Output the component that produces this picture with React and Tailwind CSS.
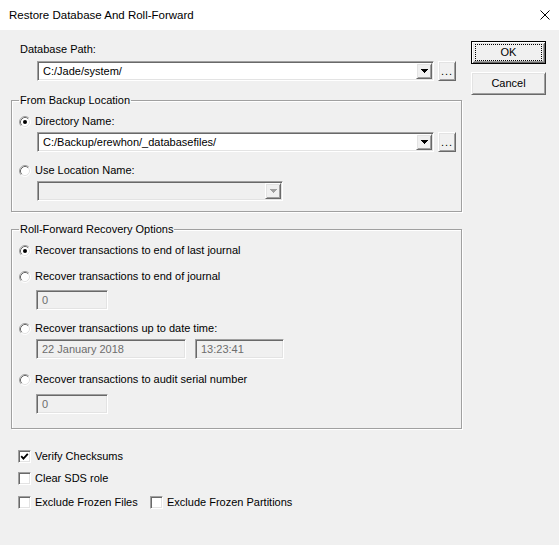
import React from "react";

const sunken =
  "border border-t-[#a0a0a0] border-l-[#a0a0a0] border-r-white border-b-white shadow-[inset_1px_1px_0_#696969,inset_-1px_-1px_0_#e3e3e3]";
const raised =
  "border border-t-white border-l-white border-r-[#696969] border-b-[#696969] shadow-[inset_1px_1px_0_#e3e3e3,inset_-1px_-1px_0_#a0a0a0]";

function Arrow({ color = "#000" }) {
  return (
    <svg width="7" height="4" viewBox="0 0 7 4" shapeRendering="crispEdges">
      <path d="M0 0h7v1h-1v1h-1v1h-1v1h-1v-1h-1v-1h-1v-1h-1z" fill={color} />
    </svg>
  );
}

function Combo({ width, value, disabled }) {
  return (
    <div
      className={`${sunken} h-[20px] p-[1px] flex ${disabled ? "bg-[#f0f0f0]" : "bg-white"}`}
      style={{ width }}
    >
      <div className="flex-1 flex items-center pl-[4px] whitespace-nowrap overflow-hidden">{value}</div>
      <div className={`${raised} w-[16px] h-[16px] bg-[#f0f0f0] flex items-center justify-center`}>
        <Arrow color={disabled ? "#a0a0a0" : "#000"} />
      </div>
    </div>
  );
}

function Ellipsis() {
  return (
    <div className={`${raised} w-[18px] h-[20px] bg-[#f0f0f0] flex items-center justify-center pt-[1px] tracking-[1px]`}>
      ...
    </div>
  );
}

function TextBox({ width, value }) {
  return (
    <div
      className={`${sunken} h-[20px] bg-[#f0f0f0] text-[#6d6d6d] flex items-center pl-[5px]`}
      style={{ width }}
    >
      {value}
    </div>
  );
}

function Radio({ checked }) {
  return (
    <svg width="12" height="12" viewBox="0 0 12 12" className="shrink-0">
      <circle cx="6" cy="6" r="5" fill="#fff" />
      <path d="M2.11 9.89A5.5 5.5 0 0 1 9.89 2.11" stroke="#a0a0a0" fill="none" />
      <path d="M9.89 2.11A5.5 5.5 0 0 1 2.11 9.89" stroke="#ffffff" fill="none" />
      <path d="M2.82 9.18A4.5 4.5 0 0 1 9.18 2.82" stroke="#696969" fill="none" />
      <path d="M9.18 2.82A4.5 4.5 0 0 1 2.82 9.18" stroke="#e3e3e3" fill="none" />
      {checked && <circle cx="6" cy="6" r="2" fill="#000" />}
    </svg>
  );
}

function RadioRow({ checked, label, className = "" }) {
  return (
    <div className={`h-[13px] flex items-center gap-[4px] ml-[7px] ${className}`}>
      <Radio checked={checked} />
      <span className="whitespace-nowrap">{label}</span>
    </div>
  );
}

function Check({ checked }) {
  return (
    <div className={`${sunken} w-[13px] h-[13px] bg-white shrink-0 flex items-center justify-center`}>
      {checked && (
        <svg width="9" height="9" viewBox="0 0 9 9">
          <polyline points="1.2,4.2 3.4,6.6 7.8,1.8" stroke="#000" strokeWidth="1.8" fill="none" />
        </svg>
      )}
    </div>
  );
}

function CheckRow({ checked, label, className = "" }) {
  return (
    <div className={`h-[13px] flex items-center gap-[4px] ${className}`}>
      <Check checked={checked} />
      <span className="whitespace-nowrap">{label}</span>
    </div>
  );
}

function Group({ title, className = "", children }) {
  return (
    <fieldset
      className={`border border-[#a0a0a0] shadow-[inset_1px_1px_0_#fff,1px_1px_0_#fff] p-0 m-0 min-w-0 ${className}`}
    >
      <legend className="ml-[7px] px-[1px] leading-[13px]">{title}</legend>
      {children}
    </fieldset>
  );
}

export default function App() {
  return (
    <div className="w-[559px] h-[545px] bg-[#f0f0f0] font-['Liberation_Sans',Arial,sans-serif] text-[11px] leading-[13px] text-black overflow-hidden">
      <div className="h-[30px] bg-white flex items-center justify-between pl-[9px] pr-[9px]">
        <span className="text-[11.5px] pt-[1px]">Restore Database And Roll-Forward</span>
        <svg width="10" height="10" viewBox="0 0 10 10" className="-mt-[1px]">
          <path d="M0.5 0.5L9.5 9.5M9.5 0.5L0.5 9.5" stroke="#000" strokeWidth="1" />
        </svg>
      </div>
      <div className="flex">
        <div className="ml-[11px] w-[451px]">
          <div className="pt-[13px] pl-[9px] h-[26px]">Database Path:</div>
          <div className="mt-[5px] ml-[26px] flex gap-[4px]">
            <Combo width={397} value="C:/Jade/system/" />
            <Ellipsis />
          </div>

          <Group title="From Backup Location" className="mt-[13px] pb-[10px]">
            <RadioRow checked label="Directory Name:" className="mt-[8px]" />
            <div className="mt-[4px] ml-[25px] flex gap-[4px]">
              <Combo width={397} value="C:/Backup/erewhon/_databasefiles/" />
              <Ellipsis />
            </div>
            <RadioRow label="Use Location Name:" className="mt-[12px]" />
            <div className="mt-[4px] ml-[25px]">
              <Combo width={246} value="" disabled />
            </div>
          </Group>

          <Group title="Roll-Forward Recovery Options" className="mt-[11px] pb-[14px]">
            <RadioRow checked label="Recover transactions to end of last journal" className="mt-[8px]" />
            <RadioRow label="Recover transactions to end of journal" className="mt-[13px]" />
            <div className="mt-[7px] ml-[24px]">
              <TextBox width={72} value="0" />
            </div>
            <RadioRow label="Recover transactions up to date time:" className="mt-[12px]" />
            <div className="mt-[4px] ml-[24px] flex gap-[9px]">
              <TextBox width={150} value="22 January 2018" />
              <TextBox width={89} value="13:23:41" />
            </div>
            <RadioRow label="Recover transactions to audit serial number" className="mt-[14px]" />
            <div className="mt-[8px] ml-[24px]">
              <TextBox width={72} value="0" />
            </div>
          </Group>

          <div className="ml-[7px]">
            <CheckRow checked label="Verify Checksums" className="mt-[21px]" />
            <CheckRow label="Clear SDS role" className="mt-[9px]" />
            <div className="mt-[11px] flex">
              <CheckRow label="Exclude Frozen Files" className="w-[132px]" />
              <CheckRow label="Exclude Frozen Partitions" />
            </div>
          </div>
        </div>

        <div className="ml-[9px] mt-[11px] flex flex-col gap-[8px]">
          <div className="w-[75px] h-[23px] border border-black bg-[#f0f0f0] shadow-[inset_1px_1px_0_#fff,inset_-1px_-1px_0_#696969,inset_2px_2px_0_#e3e3e3,inset_-2px_-2px_0_#a0a0a0] px-[3px] py-[2px] flex">
            <div className="flex-1 border border-dotted border-black flex items-center justify-center">OK</div>
          </div>
          <div className={`${raised} w-[75px] h-[23px] bg-[#f0f0f0] flex items-center justify-center`}>
            Cancel
          </div>
        </div>
      </div>
    </div>
  );
}
